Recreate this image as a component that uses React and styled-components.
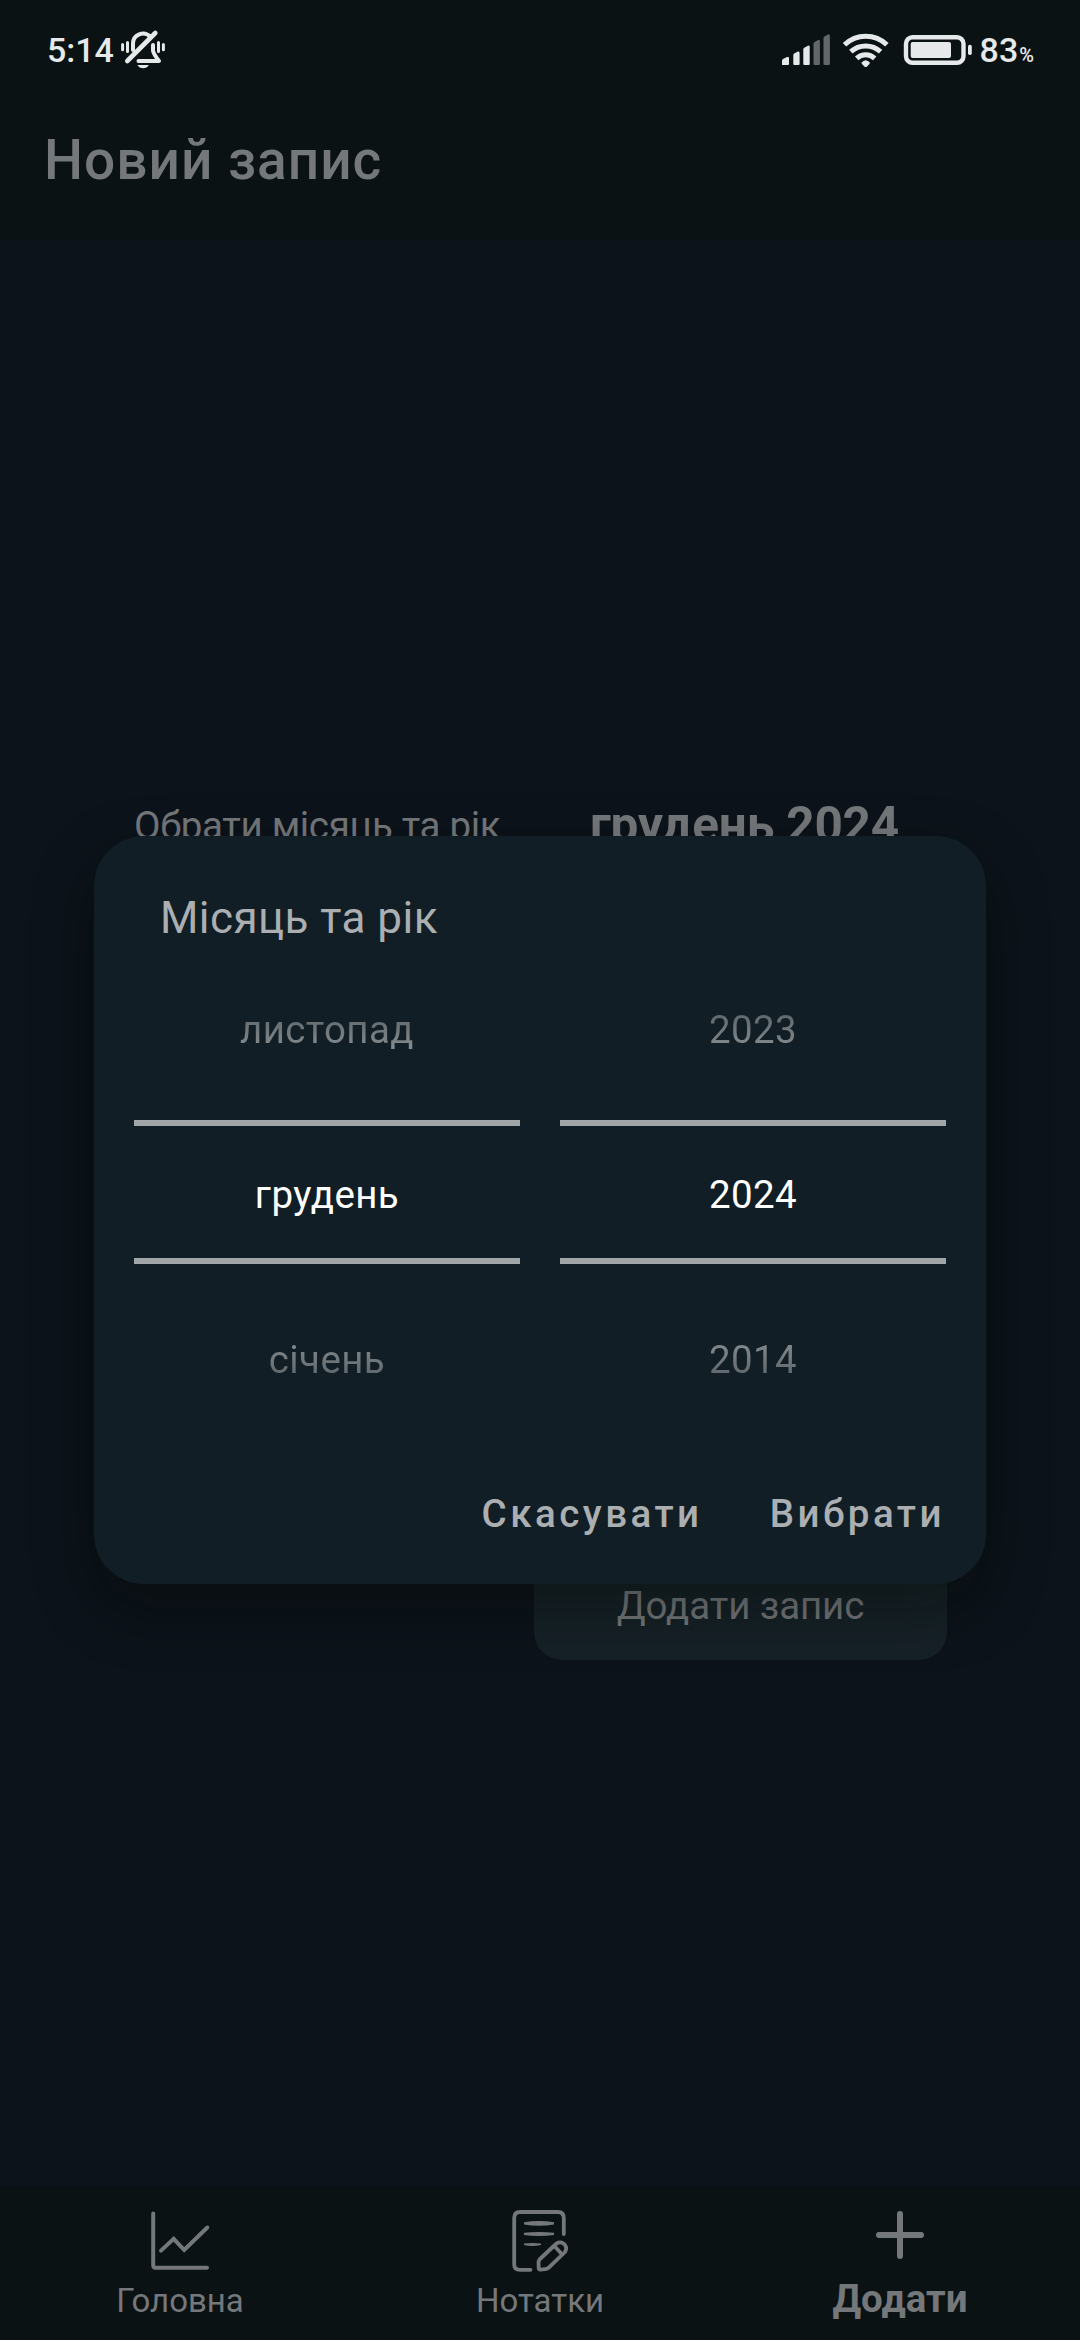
import React from 'react';
import styled, { createGlobalStyle } from 'styled-components';

const GlobalStyle = createGlobalStyle`
  * { box-sizing: border-box; }
  body { margin: 0; background: #0c131b; }
  button { border: 0; padding: 0; margin: 0; background: none; font-family: inherit; }
  svg { display: block; }
`;

const Screen = styled.div`
  position: relative;
  width: 1080px;
  height: 2340px;
  display: flex;
  flex-direction: column;
  overflow: hidden;
  background: #0c131a;
  color: #75787b;
  font-family: Roboto, "Noto Sans", sans-serif;
`;

const TopArea = styled.header`
  height: 240px;
  flex: none;
  background: #0a1214;
`;

const StatusBar = styled.div`
  height: 100px;
  padding: 0 46px 0 47px;
  display: flex;
  align-items: center;
  justify-content: space-between;
  color: #e6e9e9;
`;

const StatusGroup = styled.div`
  display: flex;
  align-items: center;
`;

const StatusText = styled.span`
  font-size: 34px;
  font-weight: 500;
  line-height: 40px;
`;

const Percent = styled.span`
  font-size: 20px;
  font-weight: 500;
  line-height: 30px;
  margin: 9px 0 0 1px;
`;

const ScreenTitle = styled.h1`
  margin: 24px 0 0 44px;
  font-size: 55px;
  font-weight: 500;
  line-height: 72px;
  letter-spacing: 1px;
`;

const Main = styled.main`
  flex: 1;
  padding: 546px 133px 526px 134px;
  display: flex;
  flex-direction: column;
  justify-content: space-between;
`;

const FieldRow = styled.div`
  display: flex;
  align-items: center;
  height: 80px;
`;

const FieldLabel = styled.span`
  width: 456px;
  font-size: 38.5px;
  line-height: 46px;
  letter-spacing: -0.34px;
  white-space: nowrap;
`;

const FieldValue = styled.span`
  margin-bottom: 3px;
  font-size: 49.5px;
  font-weight: 700;
  line-height: 60px;
  letter-spacing: -0.2px;
  white-space: nowrap;
`;

const SubmitButton = styled.button`
  align-self: flex-end;
  width: 413px;
  height: 108px;
  border-radius: 28px;
  background: #162127;
  color: #75787b;
  font-size: 38.5px;
  line-height: 46px;
  letter-spacing: -0.1px;
`;

const BottomNav = styled.nav`
  height: 154px;
  flex: none;
  display: grid;
  grid-template-columns: repeat(3, 1fr);
  background: #0a1214;
`;

const NavItem = styled.a`
  display: flex;
  flex-direction: column;
  align-items: center;
  padding-top: 20px;
`;

const NavLabel = styled.span`
  margin-top: ${(p) => (p.$active ? '7px' : '9px')};
  font-size: ${(p) => (p.$active ? '38.5px' : '33px')};
  font-weight: ${(p) => (p.$active ? 700 : 400)};
  line-height: 40px;
`;

const DialogLayer = styled.div`
  position: absolute;
  inset: 0;
  padding-top: 80px;
  display: flex;
  align-items: center;
  justify-content: center;
`;

const Dialog = styled.section`
  width: 892px;
  height: 748px;
  padding: 0 40px;
  display: flex;
  flex-direction: column;
  border-radius: 50px;
  background: #111e25;
  box-shadow: 0 24px 60px rgba(4, 10, 4, 0.42);
`;

const DialogTitle = styled.h2`
  margin: 56px 0 0 26px;
  font-size: 44px;
  font-weight: 400;
  line-height: 52px;
  letter-spacing: 0.45px;
  color: #abafb1;
`;

const Wheels = styled.div`
  margin-top: 3px;
  display: grid;
  grid-template-columns: 1fr 1fr;
  gap: 40px;
`;

const Wheel = styled.div`
  height: 495px;
  display: grid;
  grid-template-rows: repeat(3, 165px);
`;

const WheelItem = styled.div`
  display: flex;
  align-items: center;
  justify-content: center;
  font-size: 38.5px;
  line-height: 46px;
  letter-spacing: 0.4px;
  color: #fff;
`;

const WheelText = styled.span`
  padding: 0 4px;
  ${(p) =>
    p.$fade &&
    `color: transparent;
     background: linear-gradient(${p.$fade}, #565f64, #8a9093);
     background-clip: text;
     -webkit-background-clip: text;`}
`;

const SelectedFrame = styled.div`
  width: 386px;
  height: 144px;
  margin-bottom: 6px;
  border-top: 6px solid #a0a5a7;
  border-bottom: 6px solid #a0a5a7;
  display: flex;
  align-items: center;
  justify-content: center;
  padding-top: 6px;
`;

const DialogActions = styled.div`
  margin-top: 42px;
  display: flex;
  justify-content: flex-end;
  gap: 67px;
  padding-right: 1px;
`;

const DialogButton = styled.button`
  height: 60px;
  color: #abafb1;
  font-size: 38.5px;
  font-weight: 500;
  line-height: 60px;
  letter-spacing: 3.5px;
`;

const MutedBell = () => (
  <svg width="46" height="42" viewBox="120 29 46 42" fill="none" stroke="currentColor" strokeLinecap="round" strokeLinejoin="round">
    <path d="M133 50V43.500A10 10 0 0 1 150 36.500" strokeWidth="4" />
    <path d="M153 45V50.500Q153.500 54 159 61H138.500" strokeWidth="4" />
    <path d="M127.300 61L155.300 33" strokeWidth="4.600" />
    <path d="M137.500 65H148.800A6.500 6.500 0 0 1 137.500 65Z" fill="currentColor" stroke="none" />
    <path d="M122.600 44.500V49.800M127.500 42.500V51.500M158.500 42.500V51.500M163.400 44.500V49.800" strokeWidth="3" />
  </svg>
);

const Signal = () => (
  <svg width="50" height="34" viewBox="780 33 50 34" fill="currentColor">
    <path d="M781 65V60.500Q781 59.500 782 59L786 57Q788 56.500 788 58V64Q788 65 787 65H782Z" />
    <path d="M792.300 64V55Q792.300 54 793.200 53.500L796.800 51.500Q798.600 51 798.600 53V64Q798.600 65 797.600 65H793.300Q792.300 65 792.300 64Z" />
    <path d="M802.300 64V49.500Q802.300 48.300 803.200 47.800L807 45.700Q808.700 45 808.700 47V64Q808.700 65 807.700 65H803.300Q802.300 65 802.300 64Z" />
    <path opacity=".4" d="M812.500 64V44Q812.500 42.800 813.400 42.200L817 40.100Q818.900 39.400 818.900 41V64Q818.900 65 817.900 65H813.500Q812.500 65 812.500 64Z" />
    <path opacity=".4" d="M822.500 64V38.500Q822.500 37.200 823.400 36.600L827 34.400Q828.900 33.700 828.900 36V64Q828.900 65 827.900 65H823.500Q822.500 65 822.500 64Z" />
  </svg>
);

const Wifi = () => (
  <svg width="50" height="36" viewBox="840 31 50 36" fill="none" stroke="currentColor" strokeWidth="5">
    <path d="M843.500 43.800A30.500 30.500 0 0 1 885.900 43.800" />
    <path d="M849.800 50.700A22 22 0 0 1 879.600 50.700" />
    <path d="M855.700 57.400A13 13 0 0 1 873.700 57.400" />
    <path d="M860.300 61.800Q864.700 56.700 869.100 61.800Q868.500 63.500 865.800 65.700Q864.700 66.500 863.600 65.700Q861 63.500 860.300 61.800Z" fill="currentColor" stroke="none" />
  </svg>
);

const Battery = () => (
  <svg width="70" height="32" viewBox="902 33 70 32">
    <rect x="905" y="36.200" width="57.500" height="25.600" rx="6.500" fill="none" stroke="currentColor" strokeWidth="4.400" />
    <rect x="909.700" y="41" width="40.300" height="16" rx="2" fill="currentColor" />
    <rect x="967" y="43.800" width="3.800" height="10.200" rx="1.800" fill="currentColor" />
  </svg>
);

const ChartIcon = () => (
  <svg width="64" height="66" viewBox="148 2206 64 66" fill="none" stroke="currentColor" strokeWidth="4" strokeLinecap="round">
    <path d="M153.200 2213.500V2265Q153.200 2267.800 155.500 2267.800H207" />
    <path d="M161 2250.600L173.700 2238.800L184.200 2250L207.300 2227.500" />
  </svg>
);

const NotesIcon = () => (
  <svg width="64" height="66" viewBox="508 2206 64 66" fill="none" stroke="currentColor" strokeWidth="3.800" strokeLinecap="round" strokeLinejoin="round">
    <path d="M530.500 2269.800H520Q514.200 2269.800 514.200 2264.500V2218Q514.200 2212 520 2212H558Q563.800 2212 563.800 2218.500V2234" />
    <path d="M524 2222.300Q539 2219.500 554 2222.300V2224.500Q539 2227 524 2224.500ZM524 2232.800Q539 2231.200 554 2232.800V2235Q539 2236.800 524 2235ZM524 2243.600Q532 2242.400 541 2243.600V2245Q532 2246.800 524 2245Z" fill="currentColor" stroke="none" />
    <path d="M538.500 2262Q538.800 2260.200 540 2259L556.500 2243.500Q560 2241.300 563.500 2243.500Q568 2247 565 2252L548.500 2267.800Q547 2269 545 2269.200L540.500 2269.600Q538.600 2269.600 538.700 2267.500Z" />
    <path d="M554.800 2246.500L561.500 2253.800" />
  </svg>
);

const PlusIcon = () => (
  <svg width="64" height="66" viewBox="868 2206 64 66" stroke="currentColor" strokeWidth="6" strokeLinecap="round">
    <path d="M879 2235H921M900 2214V2256" />
  </svg>
);

const navItems = [
  { label: 'Головна', Icon: ChartIcon },
  { label: 'Нотатки', Icon: NotesIcon },
  { label: 'Додати', Icon: PlusIcon, active: true },
];

const wheels = [
  ['листопад', 'грудень', 'січень'],
  ['2023', '2024', '2014'],
];

const Gap = styled.span`
  width: ${(p) => p.$w}px;
`;

export default function App() {
  return (
    <>
      <GlobalStyle />
      <Screen>
        <TopArea>
          <StatusBar>
            <StatusGroup>
              <StatusText>5:14</StatusText>
              <Gap $w={6} />
              <MutedBell />
            </StatusGroup>
            <StatusGroup>
              <Signal />
              <Gap $w={10} />
              <Wifi />
              <Gap $w={12} />
              <Battery />
              <Gap $w={7} />
              <StatusText>83</StatusText>
              <Percent>%</Percent>
            </StatusGroup>
          </StatusBar>
          <ScreenTitle>Новий запис</ScreenTitle>
        </TopArea>
        <Main>
          <FieldRow>
            <FieldLabel>Обрати місяць та рік</FieldLabel>
            <FieldValue>грудень 2024</FieldValue>
          </FieldRow>
          <SubmitButton>Додати запис</SubmitButton>
        </Main>
        <BottomNav>
          {navItems.map(({ label, Icon, active }) => (
            <NavItem key={label}>
              <Icon />
              <NavLabel $active={active}>{label}</NavLabel>
            </NavItem>
          ))}
        </BottomNav>
        <DialogLayer>
          <Dialog>
            <DialogTitle>Місяць та рік</DialogTitle>
            <Wheels>
              {wheels.map(([previous, current, next]) => (
                <Wheel key={current}>
                  <WheelItem>
                    <WheelText $fade="to bottom">{previous}</WheelText>
                  </WheelItem>
                  <WheelItem>
                    <SelectedFrame>
                      <WheelText>{current}</WheelText>
                    </SelectedFrame>
                  </WheelItem>
                  <WheelItem>
                    <WheelText $fade="to top">{next}</WheelText>
                  </WheelItem>
                </Wheel>
              ))}
            </Wheels>
            <DialogActions>
              <DialogButton>Скасувати</DialogButton>
              <DialogButton>Вибрати</DialogButton>
            </DialogActions>
          </Dialog>
        </DialogLayer>
      </Screen>
    </>
  );
}
